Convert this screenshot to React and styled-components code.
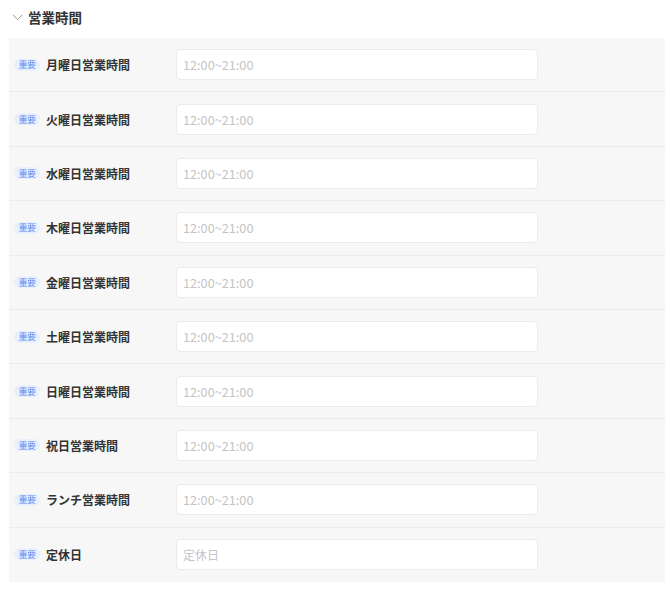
import React from "react";
import styled, { createGlobalStyle } from "styled-components";

const GlobalStyle = createGlobalStyle`
  body {
    margin: 0;
    background: #ffffff;
    font-family: "Noto Sans CJK JP", "Noto Sans", sans-serif;
    color: #333333;
  }
`;

const Section = styled.section`
  padding: 0 5px 0 9px;
`;

const Header = styled.div`
  display: flex;
  align-items: center;
  gap: 5px;
  height: 38px;
  padding-left: 3px;
  padding-bottom: 4px;
  box-sizing: border-box;
`;

const Title = styled.h2`
  margin: 0;
  font-size: 13.5px;
  font-weight: 700;
  color: #333333;
`;

const Panel = styled.div`
  background: #f7f7f7;
`;

const Row = styled.div`
  display: flex;
  align-items: center;
  min-height: 53.4px;
  border-bottom: 1px solid ${props => (props.last ? "transparent" : "#ebebeb")};
`;

const LabelCell = styled.div`
  display: flex;
  align-items: center;
  gap: 6px;
  width: 167px;
  padding-left: 5px;
  box-sizing: border-box;
`;

const Badge = styled.span`
  display: inline-flex;
  align-items: center;
  justify-content: center;
  width: 26px;
  height: 12px;
  border-radius: 6px;
  background: #e8f0fe;
  color: #5b8def;
  font-size: 9px;
  font-weight: 400;
  line-height: 1;
  letter-spacing: -0.5px;
`;

const Label = styled.span`
  font-size: 12px;
  font-weight: 700;
  color: #333333;
`;

const Input = styled.input`
  width: 362px;
  height: 31px;
  box-sizing: border-box;
  border: 1px solid #ebebeb;
  border-radius: 4px;
  background: #ffffff;
  padding: 0 6px;
  font-family: inherit;
  font-size: ${props => (props.small ? "12px" : "12.7px")};
  color: #333333;
  outline: none;
  &::placeholder {
    color: #c4c4c4;
  }
`;

const Chevron = () => (
  <svg width="11" height="8" viewBox="0 0 11 8" fill="none">
    <path d="M1 2l4.5 4.5L10 2" stroke="#9a9a9a" strokeWidth="1" />
  </svg>
);

const fields = [
  { label: "月曜日営業時間", placeholder: "12:00~21:00" },
  { label: "火曜日営業時間", placeholder: "12:00~21:00" },
  { label: "水曜日営業時間", placeholder: "12:00~21:00" },
  { label: "木曜日営業時間", placeholder: "12:00~21:00" },
  { label: "金曜日営業時間", placeholder: "12:00~21:00" },
  { label: "土曜日営業時間", placeholder: "12:00~21:00" },
  { label: "日曜日営業時間", placeholder: "12:00~21:00" },
  { label: "祝日営業時間", placeholder: "12:00~21:00" },
  { label: "ランチ営業時間", placeholder: "12:00~21:00" },
  { label: "定休日", placeholder: "定休日", small: true }
];

export default function App() {
  return (
    <>
      <GlobalStyle />
      <Section>
        <Header>
          <Chevron />
          <Title>営業時間</Title>
        </Header>
        <Panel>
          {fields.map((f, i) => (
            <Row key={f.label} last={i === fields.length - 1}>
              <LabelCell>
                <Badge>重要</Badge>
                <Label>{f.label}</Label>
              </LabelCell>
              <Input placeholder={f.placeholder} small={f.small} />
            </Row>
          ))}
        </Panel>
      </Section>
    </>
  );
}
